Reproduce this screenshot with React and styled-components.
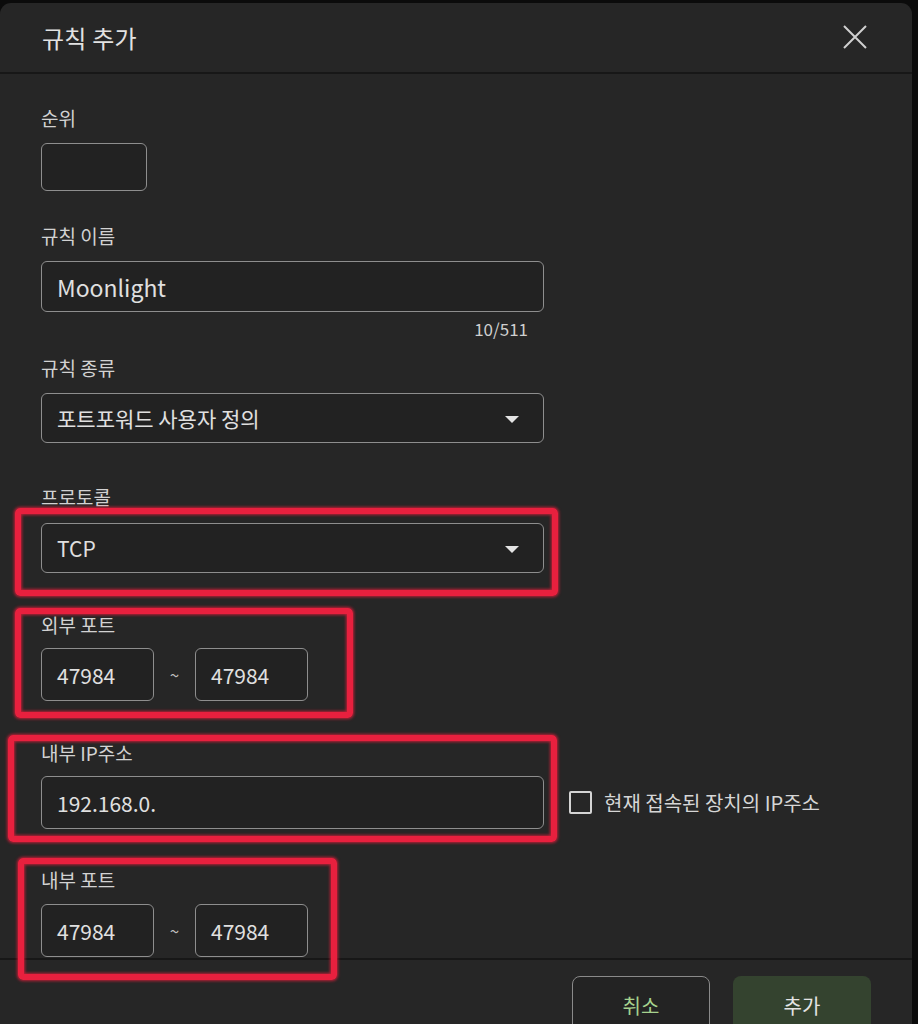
import React from "react";
import styled, { createGlobalStyle } from "styled-components";

const GlobalStyle = createGlobalStyle`
  html, body { margin: 0; padding: 0; background: #0b0b0b; }
  body { font-family: "Noto Sans CJK KR", "Noto Sans", sans-serif; }
  * { box-sizing: border-box; }
`;

const Page = styled.div`
  width: 918px;
  height: 1024px;
  overflow: hidden;
  padding: 3px 6px 0 0;
`;

const Dialog = styled.div`
  position: relative;
  width: 912px;
  height: 1040px;
  background: #262626;
  border-radius: 11px 11px 0 0;
  display: flex;
  flex-direction: column;
  color: #d6d6d6;
`;

const Header = styled.div`
  height: 71px;
  flex: none;
  display: flex;
  align-items: center;
  justify-content: space-between;
  padding: 0 44px 0 42px;
  border-bottom: 2px solid #171717;
`;

const Title = styled.h1`
  margin: 0;
  font-size: 24px;
  font-weight: 400;
  color: #e2e2e2;
  letter-spacing: 0.2px;
`;

const CloseButton = styled.button`
  width: 26px;
  height: 26px;
  padding: 0;
  border: none;
  background: transparent;
  display: flex;
  align-items: center;
  justify-content: center;
  margin-top: -2px;
`;

const Body = styled.div`
  height: 884px;
  flex: none;
  overflow: hidden;
  padding: 30px 40px 0 41px;
  display: flex;
  flex-direction: column;
`;

const Field = styled.div`
  display: flex;
  flex-direction: column;
  margin-top: ${(p) => p.$mt || 0}px;
`;

const Label = styled.div`
  font-size: 19px;
  line-height: 28px;
  height: 28px;
  color: #d2d2d2;
  margin-bottom: ${(p) => p.$gap || 11}px;
`;

const Box = styled.div`
  width: ${(p) => p.$w}px;
  height: ${(p) => p.$h || 51}px;
  border: 1.5px solid #8e8e8e;
  border-radius: 6px;
  display: flex;
  align-items: center;
  justify-content: space-between;
  padding: 0 24px 0 15px;
  font-size: ${(p) => p.$fs || 21}px;
  color: #e0e0e0;
  background: #222222;
`;

const Counter = styled.div`
  width: 503px;
  text-align: right;
  padding-right: 16px;
  font-size: 17px;
  line-height: 20px;
  margin-top: 7px;
  color: #cfcfcf;
`;

const Arrow = styled.span`
  width: 0;
  height: 0;
  border-left: 7px solid transparent;
  border-right: 7px solid transparent;
  border-top: 7px solid #e4e4e4;
  margin-top: 2px;
`;

const Row = styled.div`
  display: flex;
  align-items: center;
`;

const Tilde = styled.span`
  width: 41px;
  text-align: center;
  font-size: 17px;
  color: #bdbdbd;
`;

const CheckLabel = styled.label`
  display: flex;
  align-items: center;
  gap: 12px;
  margin-left: 25px;
  font-size: 20px;
  color: #d6d6d6;
`;

const CheckBox = styled.span`
  width: 23px;
  height: 23px;
  border: 2px solid #d4d4d4;
  border-radius: 2px;
`;

const Footer = styled.div`
  flex: none;
  border-top: 2px solid #171717;
  display: flex;
  justify-content: flex-end;
  gap: 23px;
  padding: 16px 41px 0 0;
`;

const Button = styled.button`
  width: 138px;
  height: 62px;
  border-radius: 8px;
  font-family: inherit;
  font-size: 20px;
  padding-bottom: 4px;
  border: ${(p) => (p.$primary ? "none" : "1.5px solid #8a8a8a")};
  background: ${(p) => (p.$primary ? "#34432f" : "#232323")};
  color: ${(p) => (p.$primary ? "#e4e4e4" : "#a6d28e")};
`;

const Mark = styled.div`
  position: absolute;
  left: ${(p) => p.$x}px;
  top: ${(p) => p.$y}px;
  width: ${(p) => p.$w}px;
  height: ${(p) => p.$h}px;
  border: 6px solid #e8203e;
  border-radius: 5px;
  box-shadow: 0 0 3px 1px rgba(240, 30, 60, 0.75), inset 0 0 3px 1px rgba(240, 30, 60, 0.75);
  pointer-events: none;
`;

export default function App() {
  return (
    <>
      <GlobalStyle />
      <Page>
        <Dialog>
          <Header>
            <Title>규칙 추가</Title>
            <CloseButton aria-label="close">
              <svg width="24" height="24" viewBox="0 0 24 24">
                <path d="M1 1L23 23M23 1L1 23" stroke="#d0d0d0" strokeWidth="2" />
              </svg>
            </CloseButton>
          </Header>
          <Body>
            <Field>
              <Label>순위</Label>
              <Box $w={106} $h={48} />
            </Field>
            <Field $mt={31}>
              <Label>규칙 이름</Label>
              <Box $w={503} $fs={23}>Moonlight</Box>
              <Counter>10/511</Counter>
            </Field>
            <Field $mt={15}>
              <Label>규칙 종류</Label>
              <Box $w={503} $h={50}>
                포트포워드 사용자 정의
                <Arrow />
              </Box>
            </Field>
            <Field $mt={40}>
              <Label $gap={12}>프로토콜</Label>
              <Box $w={503} $h={50}>
                TCP
                <Arrow />
              </Box>
            </Field>
            <Field $mt={38}>
              <Label $gap={9}>외부 포트</Label>
              <Row>
                <Box $w={113} $h={53}>47984</Box>
                <Tilde>~</Tilde>
                <Box $w={113} $h={53}>47984</Box>
              </Row>
            </Field>
            <Field $mt={38}>
              <Label $gap={9}>내부 IP주소</Label>
              <Row>
                <Box $w={503} $h={53}>192.168.0.</Box>
                <CheckLabel>
                  <CheckBox />
                  현재 접속된 장치의 IP주소
                </CheckLabel>
              </Row>
            </Field>
            <Field $mt={37}>
              <Label $gap={10}>내부 포트</Label>
              <Row>
                <Box $w={113} $h={53}>47984</Box>
                <Tilde>~</Tilde>
                <Box $w={113} $h={53}>47984</Box>
              </Row>
            </Field>
          </Body>
          <Footer>
            <Button>취소</Button>
            <Button $primary>추가</Button>
          </Footer>
          <Mark $x={15} $y={505} $w={543} $h={88} />
          <Mark $x={15} $y={605} $w={338} $h={110} />
          <Mark $x={8} $y={732} $w={549} $h={107} />
          <Mark $x={18} $y={855} $w={319} $h={122} />
        </Dialog>
      </Page>
    </>
  );
}
